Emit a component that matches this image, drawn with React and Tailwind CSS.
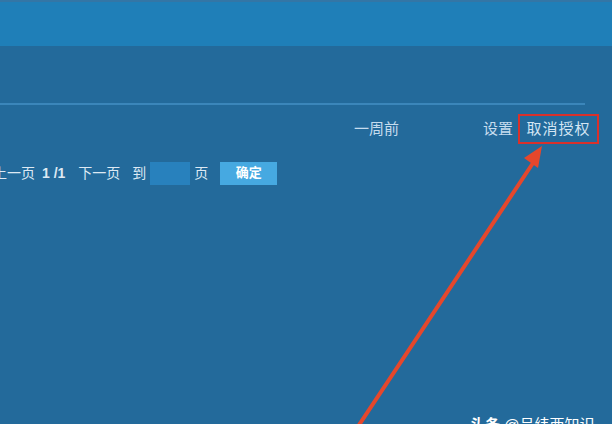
import React from 'react';

const font = "font-['Liberation_Sans','Noto_Sans_CJK_SC',sans-serif]";

function Arrow() {
  // red callout arrow pointing at the revoke link
  return (
    <svg className="absolute left-0 top-0 pointer-events-none" width="612" height="424" viewBox="0 0 612 424">
      <line x1="357" y1="428" x2="533" y2="163" stroke="#e5472c" strokeWidth="4" strokeLinecap="round" />
      <polygon points="542,146 538,168 524,158" fill="#e5472c" />
    </svg>
  );
}

function Pager() {
  return (
    <div className={`flex items-center h-[24px] -ml-[7px] text-[14px] text-[#dde9f3] ${font}`}>
      <span>上一页</span>
      <span className="ml-[7px] font-bold">1 /1</span>
      <span className="ml-[13px]">下一页</span>
      <span className="ml-[12px]">到</span>
      <div className="ml-[4px] w-[40px] h-[23px] bg-[#2881bd]" />
      <span className="ml-[4px]">页</span>
      <button className="ml-[12px] w-[57px] h-[23px] bg-[#46a9e1] text-white text-[13px] font-bold">
        确定
      </button>
    </div>
  );
}

export default function App() {
  return (
    <div className="relative w-[612px] h-[424px] overflow-hidden bg-[#236a9b]">
      <div className="h-[46px] bg-[#1f7fb8] border-t-2 border-[#3376a6]" />

      <div className="pt-[57px]">
        <div className="h-[2px] w-[585px] bg-[#3b86ba]" />

        <div className={`flex items-center h-[30px] mt-[9px] text-[15px] text-[#c6dcee] ${font}`}>
          <span className="ml-[354px]">一周前</span>
          <span className="ml-[84px]">设置</span>
          <div className="ml-[5px] w-[81px] h-[30px] border-2 border-[#d9312b] flex items-center justify-center">
            <span className="tracking-[1px] text-[#d3e5f3]">取消授权</span>
          </div>
        </div>

        <div className="mt-[17px]">
          <Pager />
        </div>
      </div>

      <div className={`absolute left-[470px] top-[414px] text-[15px] text-white whitespace-nowrap ${font}`}>
        <span className="font-bold">头条</span> @吕纬西知识
      </div>

      <Arrow />
    </div>
  );
}
